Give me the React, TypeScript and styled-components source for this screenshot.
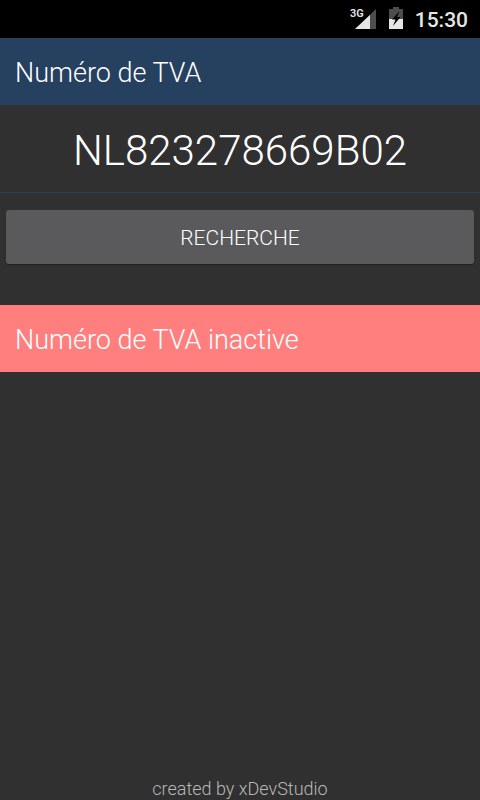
import React, { useState } from "react";
import styled, { createGlobalStyle } from "styled-components";

const GlobalStyle = createGlobalStyle`
  * { box-sizing: border-box; }
  body {
    margin: 0;
    background: #303030;
    color: #fff;
    font-family: Roboto, "Liberation Sans", sans-serif;
    font-weight: 300;
  }
`;

const Screen = styled.div`
  min-height: 100vh;
  display: flex;
  flex-direction: column;
`;

const StatusBar = styled.header`
  height: 38px;
  padding: 0 12px;
  display: flex;
  align-items: center;
  justify-content: flex-end;
  background: #000;
`;

const SignalIcon = styled.svg`
  width: 28px;
  height: 24px;
  margin-right: 12px;
`;

const NetworkLabel = styled.text`
  font-size: 11px;
  font-weight: 600;
  fill: #e6e6e6;
`;

const BatteryIcon = styled.svg`
  width: 14px;
  height: 24px;
  margin-right: 12px;
`;

const Clock = styled.time`
  font-size: 21px;
  line-height: 24px;
  font-weight: 500;
  color: #e6e6e6;
  padding-top: 2px;
`;

const Form = styled.form`
  display: flex;
  flex-direction: column;
`;

const Banner = styled.div<{ $tone: "title" | "error" }>`
  padding: 19px 15px 16px;
  font-size: 27px;
  line-height: 32px;
  background: ${(p) => (p.$tone === "title" ? "#264060" : "#ff7f7f")};
`;

const NumberInput = styled.input`
  width: 100%;
  height: 88px;
  padding: 3px 0 0;
  border: 0;
  border-bottom: 1px solid #264060;
  border-radius: 0;
  outline: 0;
  background: transparent;
  color: #fff;
  font: inherit;
  font-size: 42px;
  text-align: center;
`;

const SearchButton = styled.button`
  height: 54px;
  margin: 17px 6px 41px;
  padding: 2px 0 0;
  border: 0;
  border-radius: 3px;
  background: #5a5a5c;
  box-shadow: 0 1px 1px rgba(0, 0, 0, 0.3);
  color: #fff;
  font: inherit;
  font-size: 21px;
  line-height: 24px;
  text-transform: uppercase;
`;

const Footer = styled.footer`
  margin-top: auto;
  text-align: center;
  font-size: 18px;
  line-height: 22px;
  color: #b8b8b8;
`;

export default function App() {
  const [vat, setVat] = useState("NL823278669B02");

  return (
    <>
      <GlobalStyle />
      <Screen>
        <StatusBar>
          <SignalIcon viewBox="0 0 28 24" aria-label="3G">
            <path d="M27 2V22H6Z" fill="#4d4d4d" />
            <path d="M21 8V22H6Z" fill="#e6e6e6" />
            <NetworkLabel x="1" y="10">3G</NetworkLabel>
          </SignalIcon>
          <BatteryIcon viewBox="0 0 14 24" aria-label="Battery">
            <path d="M4 0H10V2H14V12H0V2H4Z" fill="#4d4d4d" />
            <path d="M0 12H14V22H0Z" fill="#e6e6e6" />
            <path d="M10.5 4L3 12.5H6.5L4 19L11.5 10H8Z" fill="#000" />
          </BatteryIcon>
          <Clock>15:30</Clock>
        </StatusBar>
        <Form onSubmit={(e) => e.preventDefault()}>
          <Banner as="label" htmlFor="vat" $tone="title">
            Numéro de TVA
          </Banner>
          <NumberInput
            id="vat"
            value={vat}
            spellCheck={false}
            onChange={(e) => setVat(e.target.value)}
          />
          <SearchButton type="submit">Recherche</SearchButton>
        </Form>
        <Banner role="status" $tone="error">
          Numéro de TVA inactive
        </Banner>
        <Footer>created by xDevStudio</Footer>
      </Screen>
    </>
  );
}
